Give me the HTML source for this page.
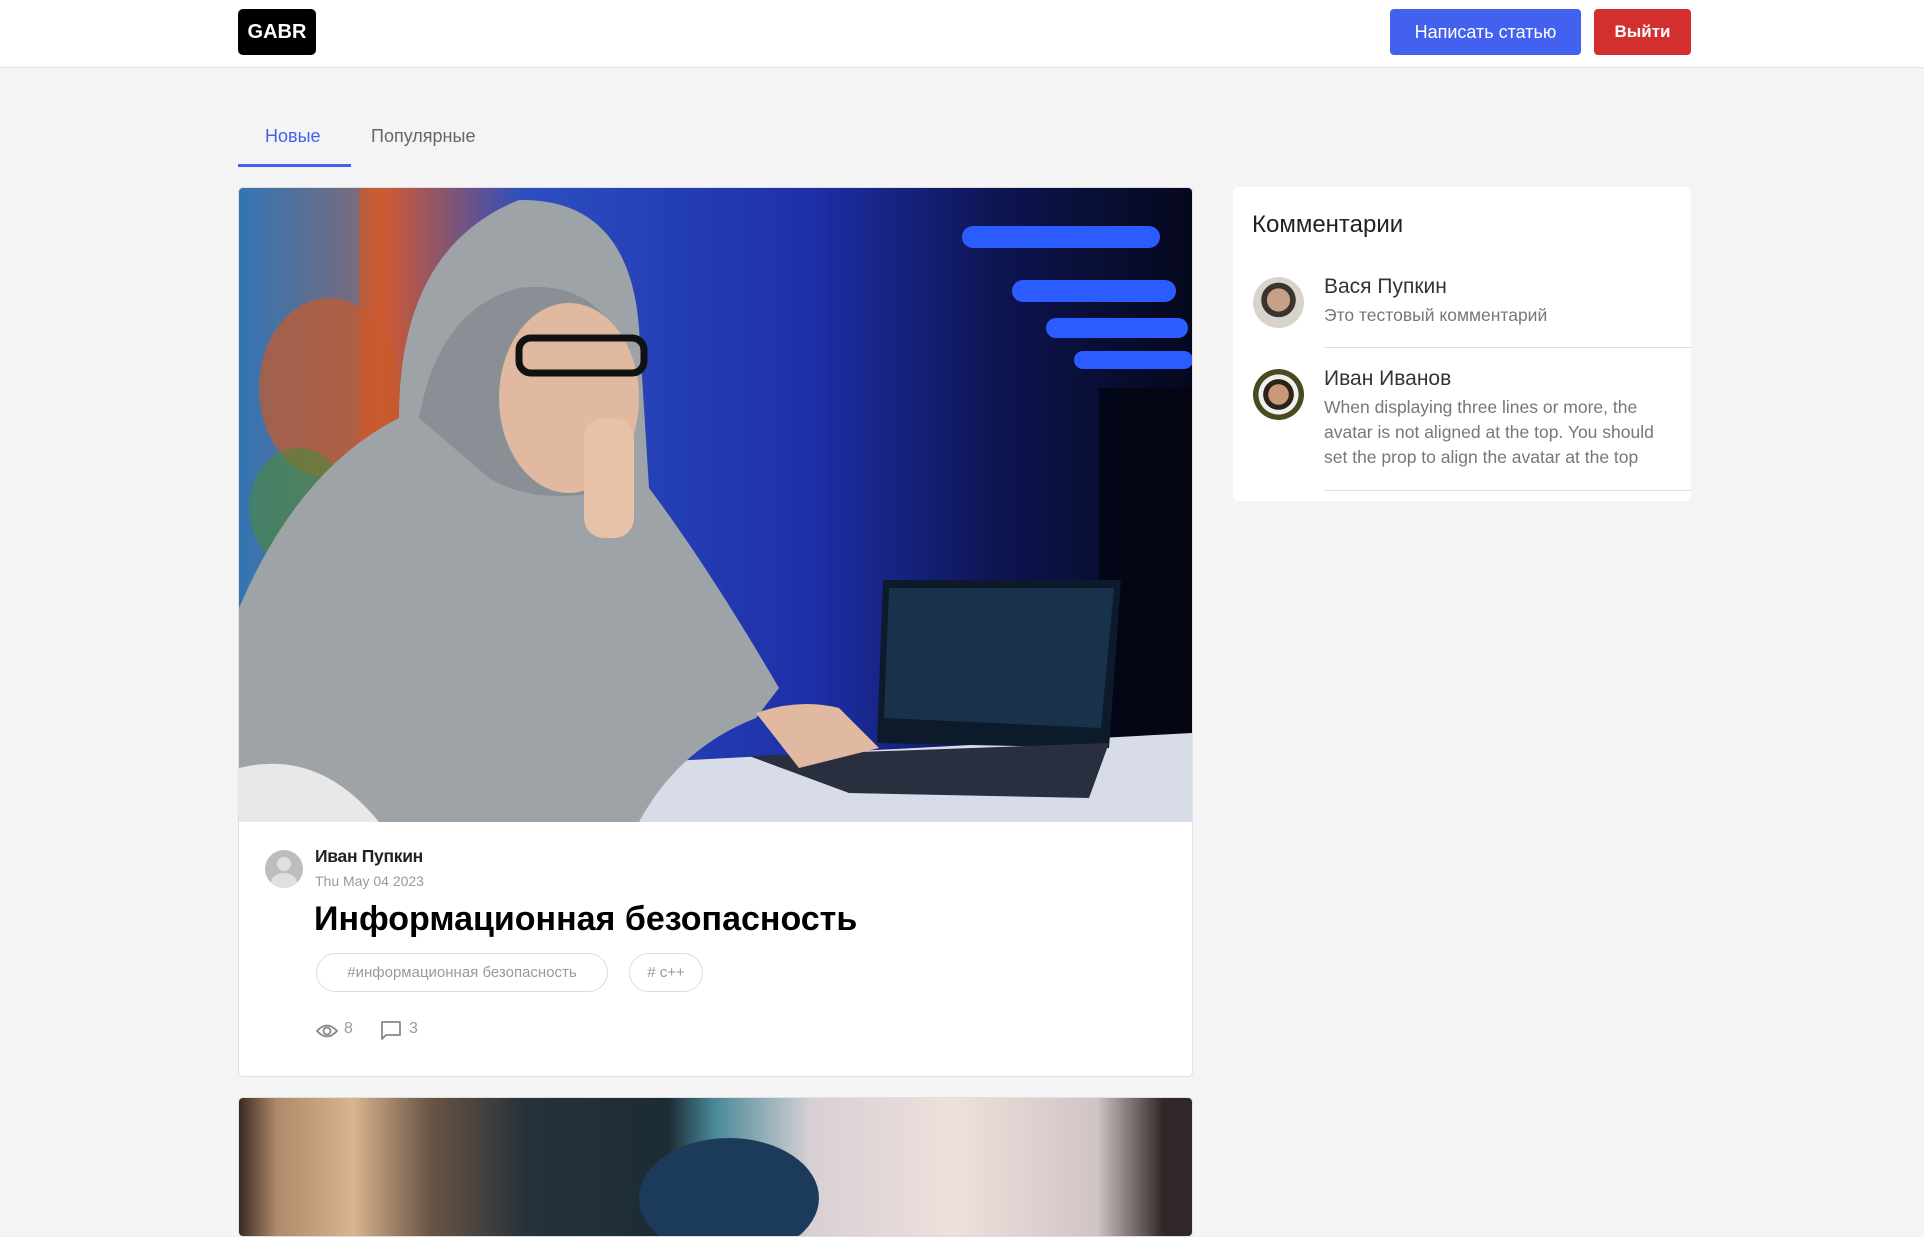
<!DOCTYPE html>
<html><head><meta charset="utf-8"><style>
*{box-sizing:border-box;margin:0;padding:0}
body{width:1924px;height:1200px;overflow:hidden;background:#f4f4f4;font-family:"Liberation Sans",sans-serif;position:relative}
.hdr{position:absolute;left:0;top:0;width:1924px;height:68px;background:#fff;border-bottom:1px solid #e2e2e2}
.logo{position:absolute;left:238px;top:9px;width:78px;height:46px;background:#000;border-radius:5px;color:#fff;font-weight:bold;font-size:20px;line-height:46px;text-align:center}
.btn{position:absolute;top:9px;height:46px;border-radius:4px;color:#fff;font-size:18px;line-height:46px;text-align:center}
.tab{position:absolute;top:126px;font-size:18px}
.card{position:absolute;background:#fff;border:1px solid #e0e0e0;border-radius:5px;overflow:hidden}
.tag{position:absolute;height:39px;border:1px solid #ddd;border-radius:20px;color:#999;font-size:15px;line-height:37px;text-align:center;white-space:nowrap}
.cn{position:absolute;font-size:21px;color:#333}
.ct{position:absolute;font-size:17.5px;color:#777;line-height:25px;width:350px}
.av{position:absolute;left:20px;width:51px;height:51px;border-radius:50%;overflow:hidden}
</style></head><body>
<div class="hdr">
<div class="logo">GABR</div>
<div class="btn" style="left:1390px;width:191px;background:#4361ee">Написать статью</div>
<div class="btn" style="left:1594px;width:97px;background:#d32f2f;font-weight:bold;font-size:17px">Выйти</div>
</div>
<div class="tab" style="left:265px;color:#4361ee">Новые</div>
<div class="tab" style="left:371px;color:#666">Популярные</div>
<div style="position:absolute;left:238px;top:164px;width:113px;height:3px;background:#4361ee"></div>

<div class="card" style="left:238px;top:187px;width:955px;height:890px">
<svg width="954" height="634" viewBox="0 0 954 634" style="display:block">
<defs>
<linearGradient id="bg" x1="0" x2="1" y1="0" y2="0"><stop offset="0" stop-color="#2a6fb0"/><stop offset=".15" stop-color="#d05a30"/><stop offset=".3" stop-color="#2b4fc0"/><stop offset=".6" stop-color="#1e2fa8"/><stop offset=".8" stop-color="#0d1450"/><stop offset="1" stop-color="#05081c"/></linearGradient>
</defs>
<rect width="954" height="634" fill="url(#bg)"/>
<rect x="0" y="0" width="120" height="634" fill="#3a7ab8" opacity=".5"/>
<ellipse cx="90" cy="200" rx="70" ry="90" fill="#c85a2a" opacity=".7"/>
<ellipse cx="60" cy="320" rx="50" ry="60" fill="#4a8a3a" opacity=".6"/>
<rect x="723" y="38" width="198" height="22" rx="11" fill="#2b5cff"/>
<rect x="773" y="92" width="164" height="22" rx="11" fill="#2b5cff"/>
<rect x="807" y="130" width="142" height="20" rx="10" fill="#2b5cff"/>
<rect x="835" y="163" width="119" height="18" rx="9" fill="#2b5cff"/>
<rect x="860" y="200" width="94" height="360" fill="#03050f" opacity=".8"/>
<polygon points="395,575 954,545 954,634 395,634" fill="#d8dce8"/>
<polygon points="644,392 882,392 870,560 638,555" fill="#0c1a2a"/>
<polygon points="650,400 875,400 862,540 645,530" fill="#17324a"/>
<polygon points="510,568 870,555 850,610 610,605" fill="#2a2f40"/>
<path d="M0 634 L0 420 Q60 280 160 230 Q160 60 280 12 Q390 10 400 140 L410 300 Q470 380 540 500 L517 530 Q440 560 400 634 Z" fill="#9ea3a8"/>
<path d="M180 230 Q200 120 280 100 Q360 90 390 170 L380 300 Q300 320 250 290 Z" fill="#8a8f95"/>
<ellipse cx="330" cy="210" rx="70" ry="95" fill="#e0b9a0"/>
<rect x="280" y="150" width="125" height="35" rx="12" fill="none" stroke="#111" stroke-width="7"/>
<rect x="345" y="230" width="50" height="120" rx="20" fill="#e8c2a8"/>
<path d="M517 525 Q560 510 600 520 L640 560 L560 580 Z" fill="#e0b9a0"/>
<path d="M0 580 Q80 560 140 634 L0 634 Z" fill="#e8e8e8"/>
</svg>
<div style="position:absolute;left:26px;top:662px;width:38px;height:38px;border-radius:50%;background:#bdbdbd;overflow:hidden"><div style="position:absolute;left:12px;top:7px;width:14px;height:14px;border-radius:50%;background:#e0e0e0"></div><div style="position:absolute;left:6px;top:23px;width:26px;height:20px;border-radius:50%;background:#e0e0e0"></div></div>
<div style="position:absolute;left:76px;top:658px;font-size:17.5px;color:#222;font-weight:bold;letter-spacing:-0.3px">Иван Пупкин</div>
<div style="position:absolute;left:76px;top:685px;font-size:14px;color:#999">Thu May 04 2023</div>
<div style="position:absolute;left:75px;top:712px;font-size:34px;font-weight:bold;color:#000">Информационная безопасность</div>
<div class="tag" style="left:77px;top:765px;width:292px">#информационная безопасность</div>
<div class="tag" style="left:390px;top:765px;width:74px"># c++</div>
<svg style="position:absolute;left:77px;top:835px" width="22" height="16" viewBox="0 0 22 16"><path d="M1 8 Q11 -3 21 8 Q11 19 1 8Z" fill="none" stroke="#888" stroke-width="1.8"/><circle cx="11" cy="8" r="3.5" fill="none" stroke="#888" stroke-width="1.8"/></svg>
<div style="position:absolute;left:105px;top:832px;font-size:16px;color:#999">8</div>
<svg style="position:absolute;left:141px;top:832px" width="22" height="21" viewBox="0 0 22 21"><path d="M2 2 H20 V15 H6 L2 19 Z" fill="none" stroke="#888" stroke-width="1.8" stroke-linejoin="round"/></svg>
<div style="position:absolute;left:170px;top:832px;font-size:16px;color:#999">3</div>
</div>

<div class="card" style="left:238px;top:1097px;width:955px;height:140px">
<div style="position:absolute;inset:0;background:linear-gradient(90deg,#3a2a24 0%,#b08a6a 4%,#d8b490 12%,#6a5444 20%,#26323a 30%,#1c2c34 45%,#4a8a98 50%,#d8d0d4 60%,#eee0dc 75%,#d0c4c4 90%,#302828 97%)"></div>
<div style="position:absolute;left:400px;top:40px;width:180px;height:120px;border-radius:50%;background:#1c3a5a"></div>
</div>

<div class="card" style="left:1233px;top:187px;width:458px;height:314px;border:none">
<div style="position:absolute;left:19px;top:24px;font-size:24px;color:#222">Комментарии</div>
<div class="av" style="top:90px;background:radial-gradient(circle at 50% 45%,#c8a088 0 30%,#3a3430 31% 45%,#d8d4cc 46%)"></div>
<div class="cn" style="left:91px;top:88px">Вася Пупкин</div>
<div class="ct" style="left:91px;top:116px">Это тестовый комментарий</div>
<div style="position:absolute;left:91px;top:160px;width:367px;height:1px;background:#ddd"></div>
<div class="av" style="top:182px;background:radial-gradient(circle at 50% 50%,#c89878 0 28%,#2a2418 29% 42%,#f0f0f0 43% 55%,#4a4a20 56%)"></div>
<div class="cn" style="left:91px;top:180px">Иван Иванов</div>
<div class="ct" style="left:91px;top:208px;width:340px">When displaying three lines or more, the avatar is not aligned at the top. You should set the prop to align the avatar at the top</div>
<div style="position:absolute;left:91px;top:303px;width:367px;height:1px;background:#ddd"></div>
</div>
</body></html>
